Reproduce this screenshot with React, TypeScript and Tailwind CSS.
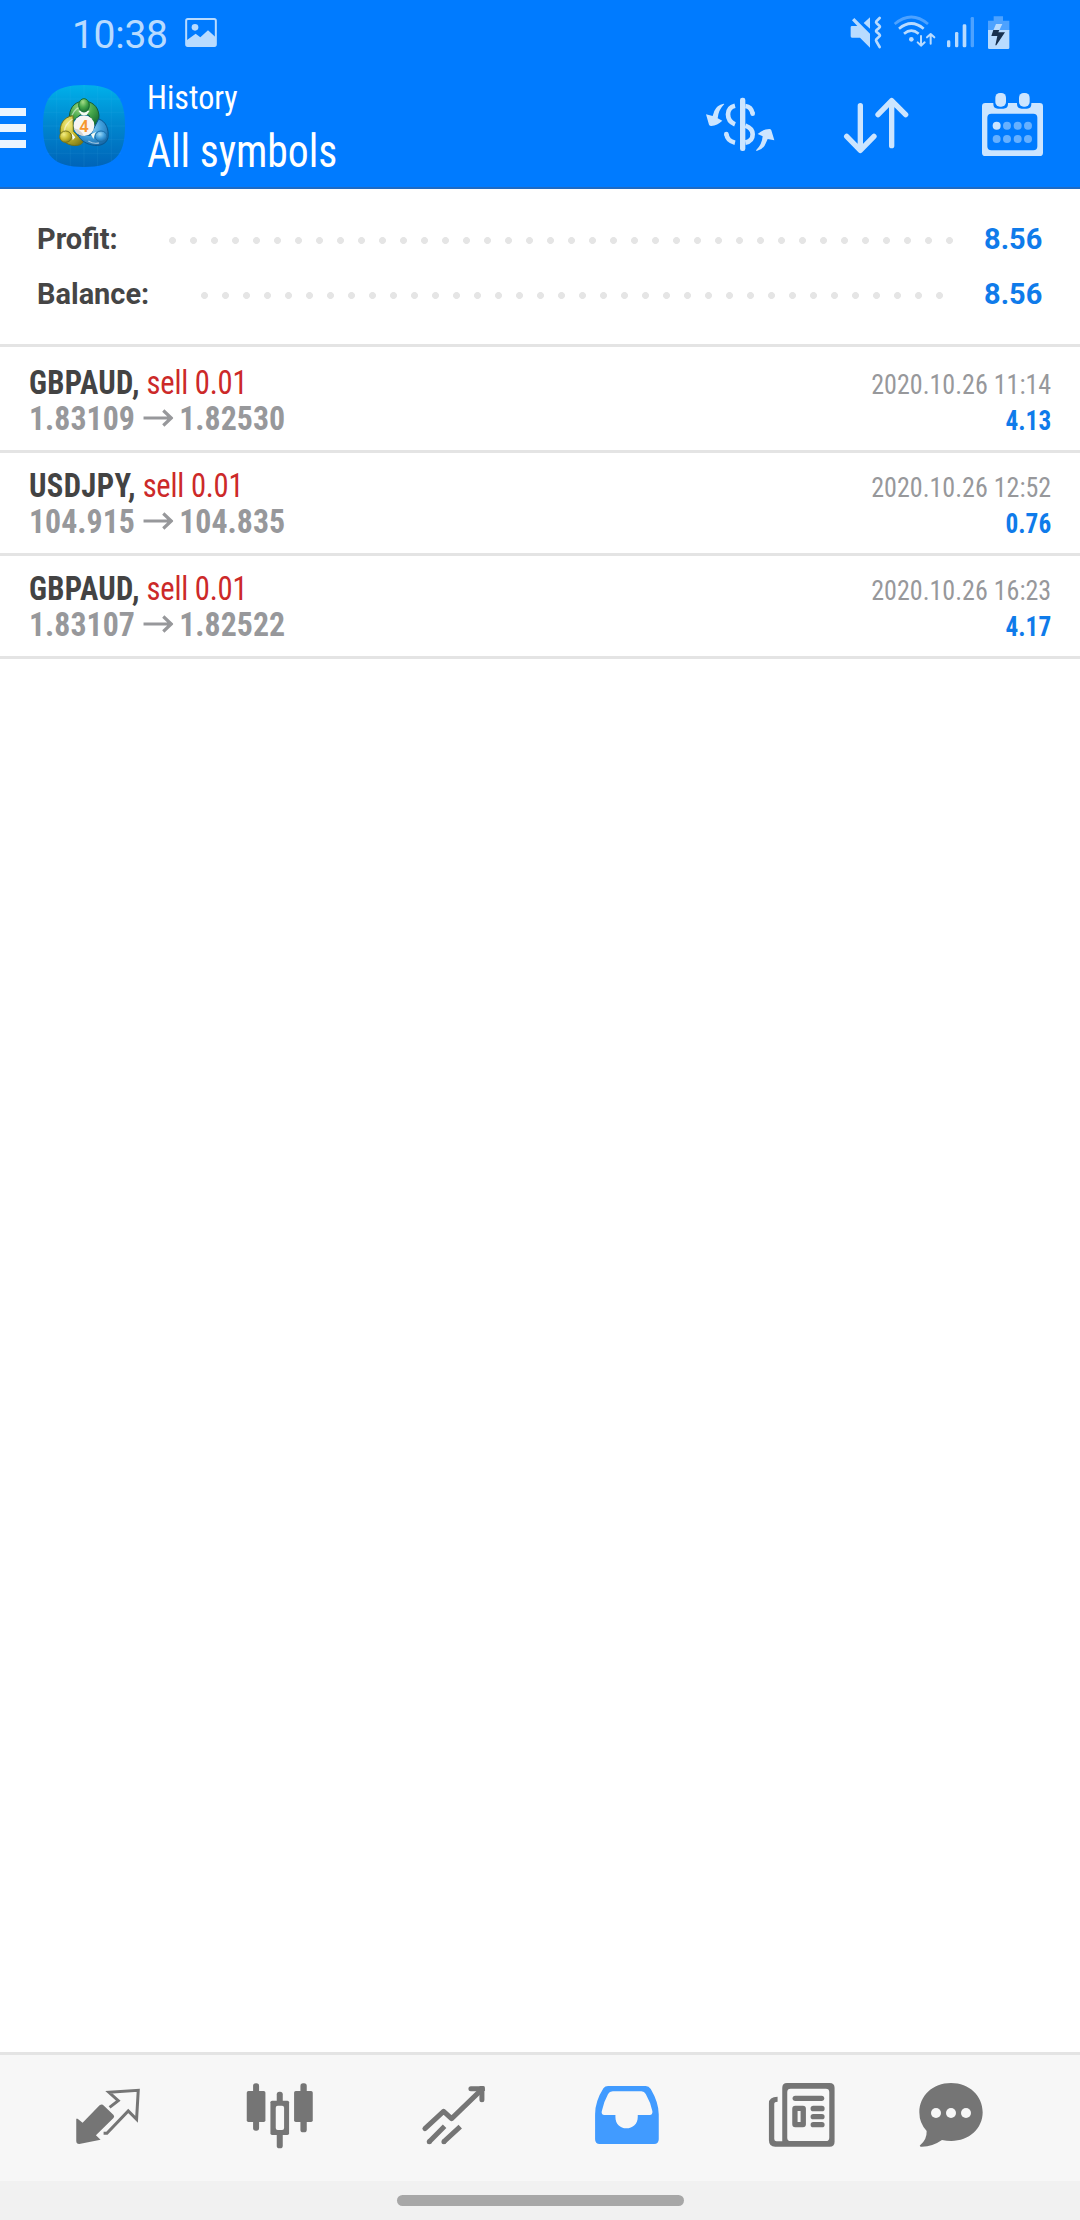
import type { ReactNode } from "react";

const deals = [
  { symbol: "GBPAUD", side: "sell 0.01", open: "1.83109", close: "1.82530", time: "2020.10.26 11:14", profit: "4.13" },
  { symbol: "USDJPY", side: "sell 0.01", open: "104.915", close: "104.835", time: "2020.10.26 12:52", profit: "0.76" },
  { symbol: "GBPAUD", side: "sell 0.01", open: "1.83107", close: "1.82522", time: "2020.10.26 16:23", profit: "4.17" },
];

function StatusBar() {
  return (
    <div className="flex h-[70px] items-start pr-[70px] pl-[72px] text-[#b8dbff]">
      <span className="mt-[12px] w-[113px] text-[39px] leading-[46px] tracking-[-0.3px]">10:38</span>
      <svg className="mt-[12px] h-[40px] w-[32px]" viewBox="555 36 96 120" fill="none">
        <rect x="558.500" y="57" width="89" height="81" rx="5" stroke="currentColor" strokeWidth="6" />
        <circle cx="585" cy="82" r="10" fill="currentColor" />
        <path d="M560 121L587 101L601 112L624 91L647 112V139H560Z" fill="currentColor" />
      </svg>
      <div className="ml-auto flex pt-[12px]">
        <svg className="mr-[10px] h-[40px] w-[34px]" viewBox="57 36 102 120" fill="currentColor">
          <path d="M66 78H82L66 61L73 54L120 101V143L90 113H66Q62 113 62 109V82Q62 78 66 78Z" />
          <path d="M101 69L120 52V86Z" />
          <path d="M149 54L139 64Q137 67 140 70L148 77Q151 80 148 83L140 90Q137 93 140 96L148 103Q151 106 148 109L139 118Q137 121 139 124L149 141" fill="none" stroke="currentColor" strokeWidth="8" strokeLinecap="round" />
        </svg>
        <svg className="mr-[10px] h-[40px] w-[43px]" viewBox="189 36 129 120" fill="none" stroke="currentColor" strokeWidth="8">
          <path d="M194 72Q244 30 294 72" stroke="#4da2ff" />
          <path d="M207 86Q244 55 281 86" />
          <path d="M222 101Q244 83 266 101" />
          <circle cx="244" cy="118" r="7" fill="currentColor" stroke="none" />
          <path d="M273 108V136M263 127L273 137L284 127M302 131V103M291 112L302 102L313 112" strokeWidth="6" strokeLinecap="round" strokeLinejoin="round" />
        </svg>
        <svg className="mr-[12px] h-[40px] w-[29px]" viewBox="348 36 87 120" fill="currentColor">
          <rect x="351" y="121" width="10" height="21" rx="4" />
          <rect x="375" y="96" width="10" height="46" rx="4" />
          <rect x="398" y="73" width="11" height="69" rx="4" />
          <rect x="422" y="51" width="10" height="91" rx="4" fill="#4da2ff" />
        </svg>
        <svg className="h-[40px] w-[23px]" viewBox="471 36 69 120">
          <path d="M491 49H519V62H538V92H474V62H491Z" fill="#4da2ff" />
          <path d="M474 90H538V143Q538 147 534 147H478Q474 147 474 143Z" fill="#b8dbff" />
          <path d="M498 72H517L508 91H490Z" fill="#b8dbff" />
          <path d="M490 90H508L505 97H525L499 136H496L502 108H484Z" fill="#17304f" />
        </svg>
      </div>
    </div>
  );
}

function Logo() {
  return (
    <svg className="h-[82px] w-[82px]" viewBox="39 30 246 246">
      <defs>
        <linearGradient id="tile" x1="0" y1="0" x2="0" y2="1">
          <stop offset="0" stopColor="#00b0ea" />
          <stop offset="0.45" stopColor="#0089d0" />
          <stop offset="1" stopColor="#0064b8" />
        </linearGradient>
        <radialGradient id="green" cx="0.4" cy="0.25" r="0.8">
          <stop offset="0" stopColor="#a5dc88" />
          <stop offset="0.5" stopColor="#47a84b" />
          <stop offset="1" stopColor="#146b30" />
        </radialGradient>
        <radialGradient id="yellow" cx="0.35" cy="0.3" r="0.8">
          <stop offset="0" stopColor="#f3ee85" />
          <stop offset="0.5" stopColor="#c9bd32" />
          <stop offset="1" stopColor="#807c18" />
        </radialGradient>
        <radialGradient id="blue" cx="0.4" cy="0.3" r="0.8">
          <stop offset="0" stopColor="#9cd9f7" />
          <stop offset="0.5" stopColor="#3d9cda" />
          <stop offset="1" stopColor="#12609f" />
        </radialGradient>
      </defs>
      <path d="M162 30C253 30 285 62 285 153S253 276 162 276S39 244 39 153S71 30 162 30Z" fill="url(#tile)" />
      <path d="M80 48V258M121 33V273M162 30V276M203 33V273M244 48V258M51 72H273M41 112H283M39 153H285M41 194H283M51 235H273" stroke="#5ec4f4" strokeOpacity="0.18" strokeWidth="1.500" />
      <path d="M118 124C120 91 140 79 162 79S204 91 207 121Q207 144 195 154L176 120H150L122 145Q117 137 118 124Z" fill="url(#green)" stroke="#145b3b" strokeWidth="3" />
      <path d="M129 122C99 126 88 151 91 174C93 199 116 215 143 211Q158 208 160 198L144 183L130 169Z" fill="url(#yellow)" stroke="#6b701a" strokeWidth="3" />
      <path d="M206 132C229 139 237 164 234 188C230 208 207 215 186 210C163 205 151 193 143 180L181 181Z" fill="url(#blue)" stroke="#095891" strokeWidth="3" />
      <path d="M126 121Q137 96 157 95M103 171Q103 148 128 132M175 198Q190 208 207 204" fill="none" stroke="#fff" strokeOpacity="0.5" strokeWidth="4" />
      <path d="M145 107L155 120H170L179 107ZM125 174L136 187L128 196ZM183 178L198 171L190 192Z" fill="#f3fbf3" />
      <ellipse cx="162" cy="91" rx="16" ry="20" fill="url(#green)" stroke="#146d32" strokeWidth="3" />
      <ellipse cx="107" cy="185" rx="18" ry="17" fill="url(#yellow)" stroke="#78751b" strokeWidth="3" />
      <ellipse cx="213" cy="184" rx="18" ry="16" fill="url(#blue)" stroke="#1c6fa9" strokeWidth="3" />
      <circle cx="162" cy="152" r="31" fill="#f7f5f3" />
      <path d="M132 160A31 31 0 0 0 162 183Q154 165 132 160Z" fill="#d4d3d1" />
      <text x="162" y="170" textAnchor="middle" fontFamily="Roboto, sans-serif" fontSize="50" fontWeight="600" fill="#f6962e">4</text>
    </svg>
  );
}

function Header() {
  return (
    <header className="h-[189px] border-b-2 border-[#1f6bc4] bg-[#007bff]">
      <StatusBar />
      <div className="flex h-[117px] items-start">
        <div className="mt-[38px] flex w-[26px] flex-col gap-[8px]">
          <i className="h-[8px] bg-[#ebf5ff]" />
          <i className="h-[8px] bg-[#ebf5ff]" />
          <i className="h-[8px] bg-[#ebf5ff]" />
        </div>
        <div className="mt-[15px] ml-[17px]">
          <Logo />
        </div>
        <div className="mt-[4px] ml-[22px] font-['Roboto_Condensed',Roboto,sans-serif] font-[450] whitespace-nowrap text-white [font-stretch:75%]">
          <div className="origin-left scale-x-[0.945] text-[34px] leading-[46px]">History</div>
          <h1 className="origin-left scale-x-[0.905] text-[46px] leading-[62px] font-[450]">All symbols</h1>
        </div>
        <div className="mt-[15px] mr-[28px] ml-auto flex gap-[56px] text-[#cce5ff]">
          <svg className="size-[80px]" viewBox="60 15 240 240" fill="currentColor">
            <rect x="180" y="53" width="16" height="160" rx="7" />
            <path d="M165 77Q144 82 144 103Q144 125 165 133M139 162Q142 183 165 188M196 78Q214 80 218 101M196 137Q218 145 218 163Q218 184 196 188" fill="none" stroke="currentColor" strokeWidth="14" />
            <circle cx="218" cy="101" r="7" />
            <circle cx="139" cy="162" r="7" />
            <path d="M131 71Q110 75 103 93L98 108L78 103L87 134Q89 138 94 138Q112 136 127 122L113 115Q115 90 133 72Z" />
            <path d="M230 213Q251 209 258 188L263 177L283 181L274 151Q272 147 268 147Q249 147 233 162L248 169Q246 194 228 211Z" />
          </svg>
          <svg className="size-[80px]" viewBox="468 15 240 240" fill="none" stroke="currentColor" strokeWidth="16" strokeLinecap="round" strokeLinejoin="round">
            <path d="M541 77V210M500 169L541 211L582 169M635 197V62M594 104L635 62L677 104" />
          </svg>
          <svg className="size-[80px]" viewBox="876 15 240 240" fill="currentColor">
            <path fillRule="evenodd" d="M916 69H940V72Q940 86 954 86H970Q984 86 984 72V69H1011V72Q1011 86 1025 86H1041Q1054 86 1054 72V69H1079Q1089 69 1089 79V218Q1089 228 1079 228H916Q906 228 906 218V79Q906 69 916 69ZM934 101Q922 101 922 113V199Q922 211 934 211H1060Q1072 211 1072 199V113Q1072 101 1060 101Z" />
            <rect x="946" y="39" width="32" height="41" rx="14" />
            <rect x="1017" y="39" width="32" height="41" rx="14" />
            <circle cx="950" cy="137" r="12" />
            <g fill="#66b0ff">
              <circle cx="981" cy="137" r="12" />
              <circle cx="1013" cy="137" r="12" />
              <circle cx="1044" cy="137" r="12" />
              <circle cx="950" cy="177" r="12" />
              <circle cx="981" cy="177" r="12" />
              <circle cx="1013" cy="177" r="12" />
              <circle cx="1044" cy="177" r="12" />
            </g>
          </svg>
        </div>
      </div>
    </header>
  );
}

const dots = "h-[21px] bg-[radial-gradient(circle,#e5e5e5_3.1px,transparent_3.8px)] bg-[length:21px_21px]";

function Summary() {
  return (
    <section className="border-b-[3px] border-[#e4e4e4] pt-[22px] pr-[38px] pb-[23px] pl-[37px] text-[30px] leading-[55px] font-bold">
      <div className="flex h-[55px] items-center">
        <span className="w-[125px] origin-left scale-x-[0.965] text-[#454545]">Profit:</span>
        <div className={`mt-[4px] w-[798px] ${dots}`} />
        <span className="ml-auto origin-right scale-x-[0.965] text-[#0f7bea]">8.56</span>
      </div>
      <div className="flex h-[55px] items-center">
        <span className="w-[157px] origin-left scale-x-[0.965] text-[#454545]">Balance:</span>
        <div className={`mt-[4px] w-[756px] ${dots}`} />
        <span className="ml-auto origin-right scale-x-[0.965] text-[#0f7bea]">8.56</span>
      </div>
    </section>
  );
}

function DealList() {
  return (
    <ul className="pt-[3px] font-['Roboto_Condensed',Roboto,sans-serif] [font-stretch:75%]">
      {deals.map((d) => (
        <li key={d.time} className="flex h-[103px] justify-between border-b-[3px] border-[#e4e4e4] px-[29px] whitespace-nowrap">
          <div className="pt-[14px] text-[34px] leading-[36px]">
            <div className="origin-left scale-x-[0.9] tracking-[-0.25px] text-[#cc2929]">
              <b className="tracking-[0.4px] text-[#434343]">{d.symbol},</b> {d.side}
            </div>
            <div className="flex origin-left scale-x-[0.937] items-center font-bold text-[#97989b]">
              <span>{d.open}</span>
              <svg className="mr-[6.4px] ml-[8.6px] h-[18px] w-[32.4px]" viewBox="0 0 30.4 18" preserveAspectRatio="none" fill="none" stroke="currentColor" strokeWidth="3.200">
                <path d="M0 9H28.500M20 1.500L28 9L20 16.500" />
              </svg>
              <span>{d.close}</span>
            </div>
          </div>
          <div className="pt-[17px] text-right text-[27.5px] leading-[36px]">
            <div className="origin-right scale-x-[0.946] text-[#97989b]">{d.time}</div>
            <div className="origin-right scale-x-[0.918] font-bold text-[#0f7bea]">{d.profit}</div>
          </div>
        </li>
      ))}
    </ul>
  );
}

function Tab({ viewBox, active, last, children }: { viewBox: string; active?: boolean; last?: boolean; children: ReactNode }) {
  return (
    <button className={`flex justify-center ${last ? "w-[127px]" : "w-[173.5px]"} ${active ? "text-[#419bff]" : "text-[#757575]"}`}>
      <svg className="size-[80px]" viewBox={viewBox} fill="currentColor">
        {children}
      </svg>
    </button>
  );
}

function BottomNav() {
  return (
    <nav className="flex h-[129px] items-start border-t-[3px] border-[#e4e4e4] bg-[#f7f7f7] pt-[20px] pl-[20px]">
      <Tab viewBox="80.25 105 240 240">
        <path d="M108 236H112L127 248L178 196Q185 191 191 197L220 225Q224 230 219 235L167 286L181 299L117 312Q108 312 108 303Z" />
        <path d="M208 202L234 182L206 157L294 151L289 238L264 213L200 280H190" fill="none" stroke="currentColor" strokeWidth="9" />
      </Tab>
      <Tab viewBox="600.75 105 240 240">
        <rect x="640" y="130" width="18" height="142" rx="8" />
        <rect x="621" y="153" width="56" height="93" rx="5" />
        <rect x="782" y="130" width="19" height="147" rx="8" />
        <rect x="763" y="153" width="56" height="93" rx="5" />
        <rect x="711" y="155" width="18" height="170" rx="8" />
        <rect x="692" y="182" width="56" height="103" rx="5" />
        <rect x="708" y="197" width="25" height="73" rx="6" fill="#f7f7f7" />
      </Tab>
      <Tab viewBox="71.25 105 240 240">
        <g fill="none" stroke="currentColor" strokeWidth="15">
          <path d="M104 266L160 214L184 236L274 149" strokeLinecap="round" strokeLinejoin="round" />
          <path d="M242 146H275V179" strokeLinecap="round" />
          <path d="M117 305L163 259M161 305L210 260" />
        </g>
        <path d="M268 138H277Q284 138 284 146V153H268Z" />
        <circle cx="117" cy="305" r="7.500" />
        <circle cx="161" cy="305" r="7.500" />
      </Tab>
      <Tab viewBox="591.75 105 240 240" active>
        <path fillRule="evenodd" d="M655 138H768Q777 138 783 147Q807 188 807 223V298Q807 312 793 312H630Q616 312 616 298V223Q616 184 641 145Q646 138 655 138ZM669 154Q659 154 655 162Q642 185 636 214Q634 225 644 225H677V231C677 252 691 265 710 265S744 252 744 231V225H780Q789 225 788 214Q783 188 768 162Q764 154 755 154Z" />
      </Tab>
      <Tab viewBox="62.25 105 240 240">
        <path fillRule="evenodd" d="M140 129H268Q283 129 283 144V305Q283 320 268 320H105Q86 320 86 301V190Q86 170 112 170V185Q102 185 102 191V297Q102 304 109 304H126V144Q126 129 140 129ZM151 146Q141 146 141 156V293Q141 303 151 303H257Q267 303 267 293V156Q267 146 257 146Z" />
        <rect x="157" y="167" width="95" height="16" rx="8" />
        <path fillRule="evenodd" d="M165 197H188Q197 197 197 206V253Q197 262 188 262H165Q156 262 156 253V206Q156 197 165 197ZM172 213V246H181V213Z" />
        <rect x="211" y="197" width="42" height="17" rx="8" />
        <rect x="211" y="222" width="42" height="16" rx="8" />
        <rect x="211" y="246" width="42" height="16" rx="8" />
      </Tab>
      <Tab viewBox="513 105 240 240" last>
        <path d="M633 129C688 129 728 167 728 217C728 266 687 303 634 303Q620 303 606 300Q576 321 543 320Q537 319 541 315Q561 298 560 273Q538 250 538 217C538 167 578 129 633 129Z" />
        <circle cx="588" cy="219" r="15" fill="#f7f7f7" />
        <circle cx="633" cy="219" r="15" fill="#f7f7f7" />
        <circle cx="678" cy="219" r="15" fill="#f7f7f7" />
      </Tab>
    </nav>
  );
}

export default function App() {
  return (
    <div className="flex h-[2220px] w-[1080px] flex-col overflow-hidden bg-white font-['Roboto',sans-serif]">
      <Header />
      <Summary />
      <main className="flex-1">
        <DealList />
      </main>
      <BottomNav />
      <div className="flex h-[39px] justify-center bg-[#f1f1f1] pt-[14px]">
        <div className="h-[11px] w-[287px] rounded-full bg-[#a7a7a7]" />
      </div>
    </div>
  );
}
